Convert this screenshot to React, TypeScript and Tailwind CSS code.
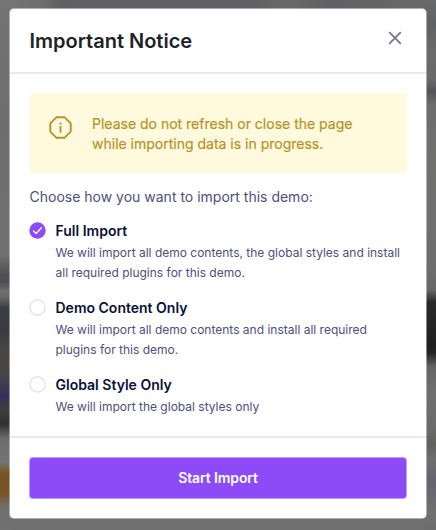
import { useState } from "react";

const options = [
  {
    id: "full",
    title: "Full Import",
    text: "We will import all demo contents, the global styles and install all required plugins for this demo.",
  },
  {
    id: "content",
    title: "Demo Content Only",
    text: "We will import all demo contents and install all required plugins for this demo.",
  },
  {
    id: "style",
    title: "Global Style Only",
    text: "We will import the global styles only",
  },
];

export default function App() {
  const [selected, setSelected] = useState("full");

  return (
    <div className="relative h-[530px] w-[436px] overflow-hidden bg-[#707070] px-[10px] pt-[9px] font-['Inter',sans-serif]">
      <Backdrop />
      <div className="relative flex h-[509px] flex-col rounded-[4px] bg-white ring-1 ring-white/45">
        <header className="flex h-[65px] shrink-0 items-center justify-between border-b-2 border-[#e8e8ee] px-[19.5px]">
          <h2 className="text-[20px] leading-7 font-semibold text-[#1d2327]">Important Notice</h2>
          <button aria-label="Close" className="mr-[5px] mb-[5px]">
            <CloseIcon />
          </button>
        </header>

        <main className="flex-1 px-[19.5px] pt-5">
          <div className="mx-[0.5px] flex h-[79px] rounded-[3px] bg-[#fffade] pt-5 pl-[19px] text-[#b4942c] ring-1 ring-[#fffade]/50">
            <InfoIcon />
            <p className="ml-5 w-[290px] text-[14px] leading-5 [-webkit-text-stroke:0.2px]">
              Please do not refresh or close the page while importing data is in progress.
            </p>
          </div>

          <p className="mt-[14px] text-[14px] leading-5 text-[#4d5078]">
            Choose how you want to import this demo:
          </p>

          <div className="mt-[14px] flex flex-col gap-[15px]">
            {options.map((o) => (
              <label key={o.id} className="flex cursor-pointer">
                <input
                  type="radio"
                  name="import"
                  className="sr-only"
                  checked={selected === o.id}
                  onChange={() => setSelected(o.id)}
                />
                <Radio checked={selected === o.id} />
                <span className="ml-[9.5px]">
                  <span className="block text-[14px] leading-5 font-semibold text-[#0b1136]">
                    {o.title}
                  </span>
                  <span className="mt-[2px] block text-[12px] leading-5 text-[#4d5078]">{o.text}</span>
                </span>
              </label>
            ))}
          </div>
        </main>

        <footer className="h-[82px] shrink-0 border-t-2 border-[#e8e8ee] px-5 pt-5">
          <button className="block h-10 w-full rounded-[3px] bg-[#8c4bf6] pb-[2px] text-[14px] font-semibold tracking-[-0.1px] text-white ring-1 ring-[#8c4bf6]/55">
            Start Import
          </button>
        </footer>
      </div>
    </div>
  );
}

/* Dimmed, blurred page peeking out around the dialog */
function Backdrop() {
  return (
    <div className="absolute inset-0" aria-hidden>
      <div className="absolute inset-y-0 left-0 w-3 bg-[linear-gradient(#747474_0px,#6d6d6d_120px,#6f6f6f_255px,#505155_274px,#4d4e52_282px,#6d6d6d_291px,#6a6a6a_296px,#3c3d42_308px,#3a3b40_330px,#484744_350px,#464545_375px,#35305a_396px,#3e3e40_410px,#303030_424px,#6b6b6d_438px,#747477_462px,#775522_473px,#765423_492px,#6f6f70_508px,#717171_530px)]" />
      <div className="absolute inset-y-0 right-0 w-3 bg-[linear-gradient(#686969_0px,#606164_25px,#6b6b6b_50px,#6a6a6b_80px,#545458_91px,#6c6c6c_104px,#70716f_160px,#6d6d6d_270px,#686868_290px,#292929_302px,#202020_345px,#242424_353px,#656565_367px,#6f6f6f_390px,#6b6b6b_430px,#61605e_443px,#6e6e6e_460px,#666370_482px,#707071_512px,#6c6c6c_530px)]" />
      <div className="absolute inset-x-3 top-0 h-3 bg-[linear-gradient(90deg,#747474,#6e6e6e_30px,#5f6063_48px,#606164_240px,#696969_270px,#606164_320px,#686969)]" />
    </div>
  );
}

function CloseIcon() {
  return (
    <svg width="14" height="14" viewBox="0 0 14 14" fill="none" stroke="#70768f" strokeWidth="1.7">
      <path d="M1.2 1.2 12.8 12.8M12.8 1.2 1.2 12.8" />
    </svg>
  );
}

function InfoIcon() {
  return (
    <svg width="23" height="23" viewBox="0 0 23 23" fill="none" stroke="currentColor" className="mt-[2px] shrink-0">
      <path d="M7.3 1.3h8.4l6 6v8.4l-6 6H7.3l-6-6V7.3z" strokeWidth="1.9" strokeLinejoin="round" />
      <path d="M11.5 10.8v5.2" strokeWidth="1.9" strokeLinecap="round" />
      <circle cx="11.5" cy="7.6" r="1.1" fill="currentColor" stroke="none" />
    </svg>
  );
}

function Radio({ checked }: { checked: boolean }) {
  return (
    <svg width="17" height="17" viewBox="0 0 17 17" fill="none" className="mt-px -ml-[0.5px] shrink-0">
      {checked ? (
        <>
          <circle cx="8.5" cy="8.5" r="8.2" fill="#8c4bf6" />
          <path
            d="M4.5 9 7.1 11.5 12.5 5.8"
            stroke="#fff"
            strokeWidth="1.3"
            strokeLinecap="round"
            strokeLinejoin="round"
          />
        </>
      ) : (
        <circle cx="8.5" cy="8.5" r="7.6" fill="#fff" stroke="#dcdce6" strokeWidth="1.1" />
      )}
    </svg>
  );
}
